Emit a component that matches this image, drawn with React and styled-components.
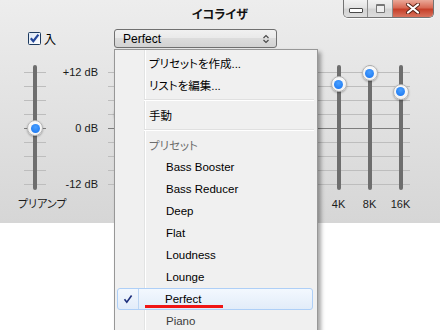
import React from 'react';
import styled, { createGlobalStyle } from 'styled-components';

const GlobalStyle = createGlobalStyle`
  html, body {
    margin: 0;
    padding: 0;
    background: #fff;
  }
  body {
    font-family: "Liberation Sans", "Noto Sans CJK JP", sans-serif;
    font-feature-settings: "palt";
    color: #000;
  }
`;

const Page = styled.div`
  position: relative;
  width: 440px;
  height: 330px;
  overflow: hidden;
  background: #fff;
`;

const Window = styled.div`
  height: 223px;
  background: linear-gradient(#ededed, #d6d6d6);
  display: flex;
  flex-direction: column;
`;

const TitleBar = styled.div`
  height: 26px;
  display: grid;
  grid-template-columns: 1fr auto 1fr;
  align-items: center;
`;

const Title = styled.div`
  grid-column: 2;
  font-size: 12px;
  font-weight: bold;
  color: #111;
`;

const WinButtons = styled.div`
  grid-column: 3;
  justify-self: end;
  align-self: start;
  margin-right: 6px;
  display: flex;
  height: 17px;
  border: 1px solid #737373;
  border-top: none;
  border-radius: 0 0 5px 5px;
  overflow: hidden;
  box-shadow: 0 1px 0 rgba(255, 255, 255, 0.8);
`;

const WinButton = styled.div`
  width: ${(props) => props.w}px;
  display: flex;
  align-items: center;
  justify-content: center;
  background: ${(props) =>
    props.close
      ? 'linear-gradient(#eaa898, #d86a55 45%, #c6402a 55%, #d8735e)'
      : 'linear-gradient(#f2f2f2, #e3e3e3 45%, #d3d3d3 55%, #dddddd)'};
  & + & {
    border-left: 1px solid #8d8d8d;
  }
`;

const MinIcon = styled.div`
  width: 12px;
  height: 3px;
  margin-top: 4px;
  border: 1px solid #4a4a4a;
  border-radius: 1px;
  background: #fff;
`;

const MaxIcon = styled.div`
  width: 7px;
  height: 6px;
  border: 1px solid #777;
  border-top-width: 2px;
  border-radius: 1px;
  background: #efefef;
`;

const ControlRow = styled.div`
  margin-top: 3px;
  height: 19px;
  display: flex;
  align-items: center;
  padding-left: 28px;
`;

const CheckLabel = styled.label`
  width: 86px;
  display: flex;
  align-items: center;
  gap: 3px;
  font-size: 12px;
`;

const Select = styled.div`
  width: 163px;
  height: 19px;
  box-sizing: border-box;
  border: 1px solid #707070;
  border-radius: 3px;
  background: linear-gradient(#f1f1f1, #e9e9e9 50%, #dcdcdc 50%, #d2d2d2);
  display: flex;
  align-items: center;
  justify-content: space-between;
  padding: 0 6px 0 8px;
  font-size: 12px;
`;

const EqSection = styled.div`
  margin-top: 17px;
  display: flex;
  padding-left: 12px;
`;

const PreampColumn = styled.div`
  width: 52px;
  display: flex;
  flex-direction: column;
  align-items: flex-start;
`;

const tickLines = `linear-gradient(to bottom, transparent 63px, #7d7d7d 63px, #7d7d7d 64px, transparent 64px),
  repeating-linear-gradient(to bottom, transparent 0, transparent 7px, #bdbdbd 7px, #bdbdbd 8px, transparent 8px, transparent 14px)`;

const SliderBox = styled.div`
  position: relative;
  width: ${(props) => props.w}px;
  height: 125px;
  margin-left: ${(props) => props.offset || 0}px;
  display: flex;
  justify-content: center;
  background: ${(props) => (props.ticks ? tickLines : 'none')};
`;

const Track = styled.div`
  width: 4px;
  height: 125px;
  border-radius: 2px;
  background: #6e6e6e;
`;

const Knob = styled.div`
  position: absolute;
  left: 50%;
  width: 16px;
  height: 16px;
  margin-left: -8px;
  box-sizing: border-box;
  border-radius: 50%;
  border: 1px solid #b5b5b5;
  background: radial-gradient(circle at 50% 40%, #ffffff, #ededed);
  box-shadow: 0 1px 2px rgba(0, 0, 0, 0.3);
  display: flex;
  align-items: center;
  justify-content: center;
  &::after {
    content: '';
    width: 9px;
    height: 9px;
    border-radius: 50%;
    background: radial-gradient(circle at 50% 35%, #4aa0ff, #1572f0);
  }
`;

const SliderLabel = styled.div`
  margin-top: 7px;
  margin-left: ${(props) => props.offset || 0}px;
  height: 14px;
  line-height: 14px;
  font-size: 11px;
  color: #1a1a1a;
  white-space: nowrap;
`;

const DbScale = styled.div`
  width: 34px;
  height: 126px;
  display: flex;
  flex-direction: column;
  justify-content: space-between;
  align-items: flex-end;
  font-size: 11px;
  line-height: 14px;
  color: #1a1a1a;
  white-space: nowrap;
`;

const BandGroup = styled.div`
  margin-left: 8px;
  display: flex;
  background: ${tickLines};
  background-size: 302px 125px;
  background-position: 2px 0;
  background-repeat: no-repeat;
`;

const Band = styled.div`
  width: 31px;
  display: flex;
  flex-direction: column;
  align-items: center;
`;

const Menu = styled.div`
  position: absolute;
  left: 114px;
  top: 49px;
  width: 204px;
  height: 300px;
  box-sizing: border-box;
  border: 1px solid #979797;
  padding-top: 2px;
  background: linear-gradient(to right, transparent 29px, #e2e3e3 29px, #e2e3e3 30px, #ffffff 30px, #ffffff 31px, transparent 31px),
    #f0f0f0;
  box-shadow: 3px 3px 4px rgba(0, 0, 0, 0.35);
  font-size: 11.5px;
`;

const MenuItem = styled.div`
  height: 22px;
  display: flex;
  align-items: center;
  padding-left: ${(props) => (props.indent ? 51 : 34)}px;
  color: ${(props) => props.tone || '#000'};
  white-space: nowrap;
`;

const Separator = styled.div`
  height: 8px;
  display: flex;
  flex-direction: column;
  justify-content: center;
  margin: 0 3px 0 29px;
  &::before {
    content: '';
    height: 1px;
    background: #e0e0e0;
  }
  &::after {
    content: '';
    height: 1px;
    background: #ffffff;
  }
`;

const SelectedItem = styled.div`
  position: relative;
  height: 22px;
  box-sizing: border-box;
  margin: 0 4px 0 2px;
  border: 1px solid #aecff7;
  border-radius: 3px;
  background: linear-gradient(#f3f8fe, #e2ecf9);
  display: flex;
  align-items: center;
  white-space: nowrap;
`;

const CheckCell = styled.div`
  width: 21px;
  height: 100%;
  box-sizing: border-box;
  border-right: 1px solid #bcd5f2;
  display: flex;
  align-items: center;
  justify-content: center;
`;

const SelectedText = styled.span`
  margin-left: 26px;
`;

const Underline = styled.div`
  position: absolute;
  left: 27px;
  top: 16px;
  width: 78px;
  height: 3px;
  background: #f01515;
`;

const bands = [
  { label: '32', value: 3 },
  { label: '64', value: 6 },
  { label: '125', value: 9 },
  { label: '250', value: 7 },
  { label: '500', value: 6 },
  { label: '1K', value: 5 },
  { label: '2K', value: 7 },
  { label: '4K', value: 9.4 },
  { label: '8K', value: 11.7 },
  { label: '16K', value: 7.8 },
];

const presets = ['Bass Booster', 'Bass Reducer', 'Deep', 'Flat', 'Loudness', 'Lounge'];

const knobTop = (db) => 63 - (db * 56) / 12 - 8;

const Slider = ({ value, w, ticks, offset }) => (
  <SliderBox w={w} ticks={ticks} offset={offset}>
    <Track />
    <Knob style={{ top: knobTop(value) }} />
  </SliderBox>
);

const CheckboxIcon = () => (
  <svg width='13' height='13' viewBox='0 0 13 13'>
    <defs>
      <linearGradient id='cbg' x1='0' y1='0' x2='1' y2='1'>
        <stop offset='0' stopColor='#dbe6f4' />
        <stop offset='1' stopColor='#ffffff' />
      </linearGradient>
    </defs>
    <rect x='0.5' y='0.5' width='12' height='12' rx='1' fill='url(#cbg)' stroke='#1d3a5f' />
    <path d='M2.8 6.3 L5.3 9.2 L10.4 2.6' fill='none' stroke='#24479a' strokeWidth='2.2' />
  </svg>
);

const UpDownIcon = () => (
  <svg width='8' height='10' viewBox='0 0 8 10'>
    <path d='M1.5 4 L4 1.5 L6.5 4 M1.5 6 L4 8.5 L6.5 6' fill='none' stroke='#4a4a4a' strokeWidth='1.2' />
  </svg>
);

const CloseIcon = () => (
  <svg width='16' height='11' viewBox='0 0 16 11'>
    <path d='M3 1.5 L13 9.5 M13 1.5 L3 9.5' stroke='#5a2418' strokeWidth='4' strokeLinecap='round' />
    <path d='M3 1.5 L13 9.5 M13 1.5 L3 9.5' stroke='#ffffff' strokeWidth='2.2' strokeLinecap='round' />
  </svg>
);

const CheckMark = () => (
  <svg width='10' height='10' viewBox='0 0 10 10'>
    <path d='M1.5 5.2 L3.8 8.2 L8.6 1.5' fill='none' stroke='#1d2f7c' strokeWidth='1.6' />
  </svg>
);

export default function App() {
  return (
    <Page>
      <GlobalStyle />
      <Window>
        <TitleBar>
          <Title>イコライザ</Title>
          <WinButtons>
            <WinButton w={23}>
              <MinIcon />
            </WinButton>
            <WinButton w={24}>
              <MaxIcon />
            </WinButton>
            <WinButton w={40} close>
              <CloseIcon />
            </WinButton>
          </WinButtons>
        </TitleBar>

        <ControlRow>
          <CheckLabel>
            <CheckboxIcon />
            入
          </CheckLabel>
          <Select>
            Perfect
            <UpDownIcon />
          </Select>
        </ControlRow>

        <EqSection>
          <PreampColumn>
            <Slider value={0} w={22} ticks offset={12} />
            <SliderLabel offset={6}>プリアンプ</SliderLabel>
          </PreampColumn>
          <DbScale>
            <span>+12 dB</span>
            <span>0 dB</span>
            <span>-12 dB</span>
          </DbScale>
          <BandGroup>
            {bands.map((b) => (
              <Band key={b.label}>
                <Slider value={b.value} w={31} />
                <SliderLabel>{b.label}</SliderLabel>
              </Band>
            ))}
          </BandGroup>
        </EqSection>
      </Window>

      <Menu>
        <MenuItem>プリセットを作成...</MenuItem>
        <MenuItem>リストを編集...</MenuItem>
        <Separator />
        <MenuItem>手動</MenuItem>
        <Separator />
        <MenuItem tone='#6d6d6d'>プリセット</MenuItem>
        {presets.map((p) => (
          <MenuItem key={p} indent>
            {p}
          </MenuItem>
        ))}
        <SelectedItem>
          <CheckCell>
            <CheckMark />
          </CheckCell>
          <SelectedText>Perfect</SelectedText>
          <Underline />
        </SelectedItem>
        <MenuItem indent tone='#3c3c3c'>
          Piano
        </MenuItem>
      </Menu>
    </Page>
  );
}
